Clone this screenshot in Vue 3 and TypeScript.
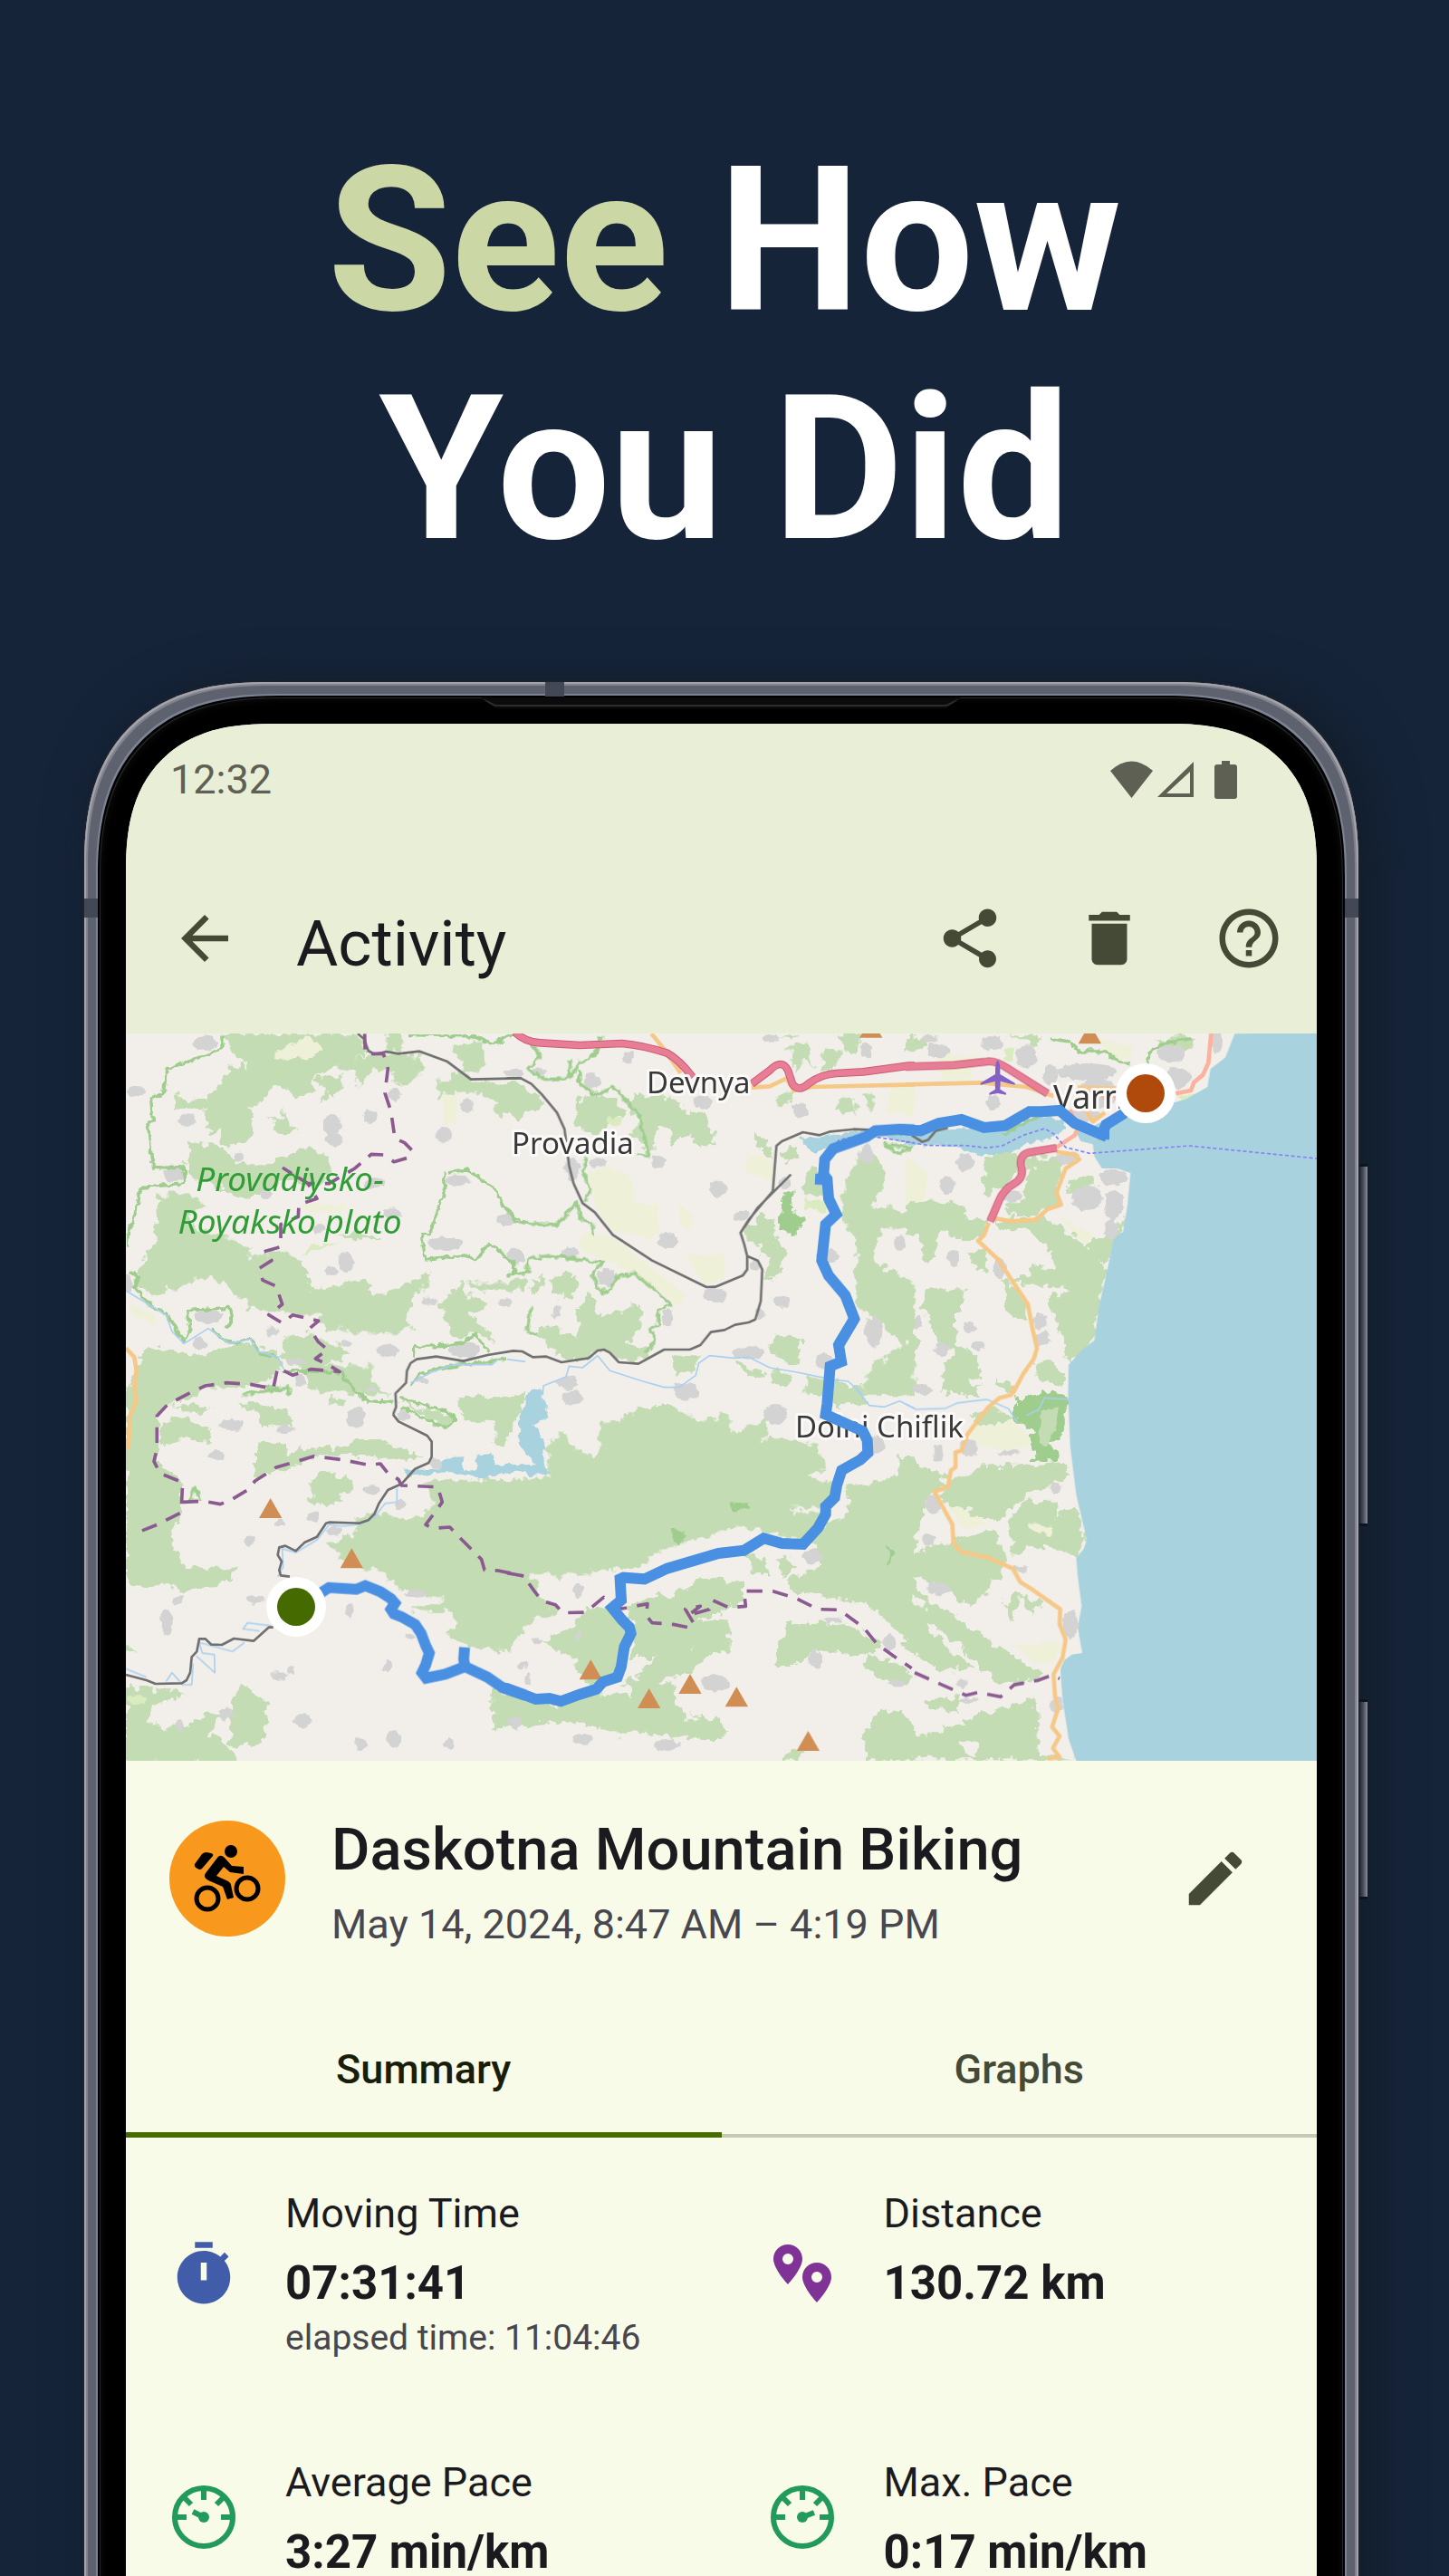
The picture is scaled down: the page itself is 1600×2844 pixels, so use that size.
<script setup lang="ts">
type Tile = 'nw' | 'n' | 'ne' | 'sw' | 's' | 'se'
type Shape = [Tile, string]
type Blob = [number, number, number, number]

interface Layer {
  name: string
  rough?: 'rough' | 'rough-fine'
  shapes: Shape[]
}

interface Stat {
  icon: 'timer' | 'pins' | 'gauge-low' | 'gauge-high'
  label: string
  value: string
  note?: string
}

const tiles: Record<Tile, string> = {
  nw: 'translate(130 1130) scale(0.33333)',
  n: 'translate(560 1130) scale(0.33333)',
  ne: 'translate(1000 1130) scale(0.33333)',
  sw: 'translate(130 1530) scale(0.33333)',
  s: 'translate(560 1530) scale(0.33333)',
  se: 'translate(1000 1530) scale(0.33333)',
}

const ground: Layer[] = [
  {
    name: 'farm',
    rough: 'rough-fine',
    shapes: [
      ['n', 'M270 490L340 475L415 515L420 590L500 600L500 700L470 715L340 680L290 600ZM350 710L590 900L580 940L430 830L240 750L250 690ZM590 770L720 765L720 850L650 860ZM570 600L620 640L600 680L570 670ZM800 430L870 450L880 520L790 490ZM1270 200L1350 200L1350 310L1260 290Z'],
      ['nw', 'M1070 230L1130 225L1115 330L1080 340ZM30 930L120 960L130 1000L60 970ZM600 600L760 600L740 625L620 625Z'],
      ['ne', 'M0 440L70 490L60 600L0 610ZM510 640L620 700L600 735ZM100 100L250 110L200 190L120 190ZM640 50L760 80L740 120L660 100Z'],
      ['se', 'M210 130L340 100L420 180L410 205L300 210L210 180ZM120 370L290 460L190 475ZM370 860L510 850L490 920L420 920Z'],
    ],
  },
  {
    name: 'forest',
    rough: 'rough',
    shapes: [
      ['nw', 'M345 34L790 34L820 95L770 130L700 155L640 180L650 220L600 240L560 210L510 215L470 260L430 290L450 310L440 380L390 405L345 400L340 350L300 370L295 290L190 280L185 240L280 255L320 215L350 200L370 140L420 140L380 90Z'],
      ['nw', 'M240 395L330 405L400 460L480 470L560 430L640 410L690 440L710 500L640 540L560 520L480 560L420 580L330 540L260 520L225 470Z'],
      ['nw', 'M130 570L220 560L300 600L230 640L260 690L360 705L440 740L440 780L540 750L600 770L620 820L650 880L760 860L830 855L850 905L920 880L1030 825L1030 860L980 900L960 980L980 1010L880 1025L830 1030L760 1010L700 1020L660 960L540 960L470 960L380 890L310 830L220 865L100 905L60 860L80 780L120 740Z'],
      ['nw', 'M90 1070L200 1090L280 1100L360 1070L440 1060L530 1100L540 1150L480 1200L280 1210L230 1250L27 1250L60 1150Z'],
      ['nw', 'M700 140L880 90L1000 110L1030 150L960 210L900 200L920 160L840 150L800 210L780 160ZM1050 200L1150 150L1180 200L1260 190L1350 230L1350 290L1300 270L1270 320L1240 260L1180 220L1060 240ZM1110 70L1200 60L1230 130L1180 165L1130 130ZM890 34L940 34L940 90L890 85Z'],
      ['nw', 'M1140 850L1070 930L1080 990L1130 1050L1190 1020L1250 1060L1200 990L1160 960L1230 940L1150 890ZM1150 860L1350 850L1350 880L1200 890ZM560 1040L650 1030L700 1060L770 1080L740 1110L680 1130L850 1140L830 1190L900 1230L640 1215L620 1150L540 1110Z'],
      ['nw', 'M650 180L740 165L750 200L720 250L700 230L660 265L690 220ZM500 310L540 330L550 270L560 330L600 360L540 365ZM720 700L800 690L880 715L780 715Z'],
      ['n', 'M235 250L300 230L360 260L390 310L330 340L300 370L225 340ZM390 250L500 230L560 260L600 290L660 290L690 400L640 400L600 370L550 400L530 350L500 330L480 430L400 370L440 330ZM0 200L60 205L115 260L100 280L60 300L40 320L0 280Z'],
      ['n', 'M925 80L990 60L1020 150L985 110L960 150ZM1050 80L1110 90L1080 150L1040 160ZM1090 34L1170 34L1150 100L1120 90ZM890 40L960 40L950 60ZM1090 240L1150 250L1160 300L1100 290ZM1180 230L1220 240L1210 300ZM890 240L950 220L930 260L890 280Z'],
      ['n', 'M780 690L840 640L890 650L880 700L920 750L910 830L850 850L870 780L820 730ZM820 360L880 410L870 440L820 400ZM900 430L960 410L970 440L930 460ZM80 850L120 840L110 900L80 880ZM140 850L200 830L240 850L220 910L160 900Z'],
      ['n', 'M280 890L300 970L350 960L440 930L440 1000L400 1060L460 1070L480 1100L420 1120L370 1110L320 1080L270 1110L190 1110L100 1030L120 990L170 1010L240 1040L230 940ZM890 1030L980 1040L975 1110L920 1130L875 1080ZM540 1095L640 1100L620 1150L560 1170ZM765 1115L850 1160L850 1175L770 1150ZM875 1145L940 1165L930 1200L880 1190Z'],
      ['n', 'M1110 580L1160 430L1230 430L1250 520L1210 610L1350 620L1350 680L1240 680L1210 780L1350 860L1350 1230L1180 1230L1190 1150L1320 1060L1240 1000L1170 960L1150 850L1160 720L1100 640ZM1020 470L1070 520L1060 560L990 570L970 540ZM1000 1170L1090 1180L1100 1230L980 1220Z'],
      ['ne', 'M260 440L370 420L380 480L330 540L260 570ZM400 440L530 440L500 540L510 600L440 630L340 640L330 610L390 580L400 520ZM530 540L600 500L640 530L550 560ZM0 600L90 580L190 600L200 640L280 660L240 710L180 715L110 690L100 770L60 780L40 700L0 690Z'],
      ['ne', 'M300 650L450 640L540 690L600 740L660 800L655 880L630 960L625 1040L580 1080L540 1130L525 1080L500 990L480 910L540 880L440 870L350 860L400 830L420 800L500 820L470 740L400 680L310 690ZM610 720L690 690L720 640L720 680L690 750L670 800L600 750Z'],
      ['ne', 'M220 760L270 740L265 830L215 790ZM310 830L350 860L400 930L400 990L320 950L340 920ZM70 880L200 880L190 930L160 970L170 1060L240 1100L250 1180L200 1180L250 1230L130 1230L120 1160L160 1080L110 1060L50 930ZM0 970L50 1050L0 1180ZM430 1130L480 1120L530 1170L520 1200L440 1180ZM300 1170L350 1200L340 1230Z'],
      ['ne', 'M330 40L450 40L440 80L390 60ZM830 60L900 40L960 50L930 90L860 80ZM0 45L70 40L60 90L0 95Z'],
      ['sw', 'M27 0L230 30L130 100L125 250L210 320L210 430L180 480L190 540L220 600L400 605L370 655L200 680L130 650L80 665L27 645Z'],
      ['sw', 'M140 120L200 100L310 140L300 190L220 170L140 200ZM400 60L480 50L570 90L580 130L480 140L450 90ZM180 65L310 70L280 95ZM450 300L450 220L480 180L550 180L570 230L600 210L680 200L720 210L790 180L870 180L1010 230L960 245L850 240L740 220L660 240L600 260L520 290ZM640 320L680 280L730 310L760 290L780 350L690 400L640 380Z'],
      ['s', 'M-500 430L-410 430L-290 440L-250 390L-270 320L-100 310L70 310L140 300L130 190L190 160L210 200L290 240L310 130L410 100L440 70L560 70L640 120L740 90L740 160L820 130L870 90L850 180L900 170L1030 200L1060 270L1000 300L1080 320L1080 380L1040 400L920 410L1060 430L980 510L860 490L780 460L690 490L520 540L430 600L300 610L240 630L80 630L120 700L170 740L60 790L40 840L0 880L-150 860L-190 830L-170 750L-330 740L-200 710L-350 680L-420 610L-530 600L-590 520L-500 500Z'],
      ['s', 'M-50 1000L40 1030L170 1060L300 1010L430 970L460 920L520 880L610 880L600 820L640 780L740 770L740 870L640 910L600 960L560 960L560 1060L700 1110L730 1150L690 1180L600 1160L550 1170L420 1140L390 1160L300 1130L170 1110L-50 1140Z'],
      ['s', 'M400 740L470 700L560 690L640 640L680 630L780 660L780 720L640 770L600 900L400 900L430 800ZM120 850L230 790L270 740L340 730L390 800L370 960L280 1000L200 900ZM780 550L860 570L870 640L820 620ZM900 560L960 590L910 640Z'],
      ['s', 'M900 870L930 790L1050 780L1180 810L1250 860L1190 890L1020 880L940 930L900 930ZM1190 890L1300 920L1350 960L1300 1000L1190 940ZM1190 1240L1180 1150L1240 1070L1310 1080L1350 1140L1350 1240ZM900 1240L950 1200L990 1190L970 1240Z'],
      ['s', 'M1120 330L1270 310L1350 230L1350 870L1260 780L1180 720L930 680L930 640L1050 600L1000 520L1060 450L1130 430ZM980 0L1180 0L1190 60L1100 70Z'],
      ['sw', 'M400 980L490 1040L490 1160L450 1200L370 1180L380 1030ZM27 1000L130 1000L230 1020L120 1060L90 1110L180 1140L250 1110L340 1080L310 1150L370 1190L400 1250L27 1250ZM700 520L770 500L790 550L720 550ZM1240 1060L1350 1040L1350 1110L1240 1140ZM1130 40L1350 30L1320 120L1280 200L1250 190L1250 120L1180 130L1130 90ZM930 50L1120 110L1080 140ZM705 35L760 50L740 65L705 60ZM30 850L65 885L30 880Z'],
      ['se', 'M-20 230L50 260L120 290L140 340L90 350L60 400L60 480L0 540L-20 540ZM160 300L260 270L410 260L530 250L540 300L410 360L290 450L200 410L110 370ZM340 460L400 380L510 380L500 440L560 390L600 510L570 560L480 540L410 530L360 560ZM150 0L250 0L200 40ZM220 90L300 70L360 110L240 130Z'],
      ['se', 'M-20 570L150 510L290 480L340 580L320 620L200 760L220 730L40 630L0 640ZM0 640L180 780L340 880L440 940L440 970L300 990L180 860L60 780L80 810L230 940L100 940L0 870ZM60 1040L180 1030L180 1080L80 1070ZM0 1150L80 1160L190 1110L280 1080L430 1030L440 1210L560 1240L0 1240ZM330 720L370 680L450 720L410 750L380 690L350 780Z'],
    ],
  },
  {
    name: 'farm',
    rough: 'rough-fine',
    shapes: [
      ['nw', 'M520 95L640 40L680 90L640 110L530 120Z'],
      ['se', 'M410 455L490 470L480 500L410 470Z'],
    ],
  },
  {
    name: 'scrub',
    rough: 'rough-fine',
    shapes: [
      ['nw', 'M610 765L640 735L740 725Z'],
      ['n', 'M980 580L1060 590L1060 630L990 610ZM340 310L380 310L370 340L330 330Z'],
      ['ne', 'M330 80L360 80L355 125L330 120ZM895 240L975 230L930 260Z'],
      ['sw', 'M30 1030L100 1030L90 1050L40 1055Z'],
    ],
  },
  {
    name: 'clearing',
    rough: 'rough',
    shapes: [
      ['ne', 'M310 690L360 690L400 720L480 760L490 790L420 770L350 740ZM410 465L440 480L430 500Z'],
      ['s', 'M520 970L560 965L560 990L500 985ZM310 980L400 990L410 1030L320 1020ZM140 900L220 880L230 930L160 940ZM560 1000L580 1060L640 1100L590 1120Z'],
      ['se', 'M20 690L75 720L60 750L30 730ZM180 1180L240 1180L240 1230L200 1220Z'],
    ],
  },
  {
    name: 'reserve',
    rough: 'rough',
    shapes: [
      ['se', 'M360 40L470 20L540 35L520 150L490 200L510 250L430 250L410 140L360 140Z'],
      ['n', 'M915 550L940 560L945 620L990 640L960 700L900 690Z'],
    ],
  },
  {
    name: 'reserve',
    rough: 'rough-fine',
    shapes: [
      ['s', 'M740 385L800 390L800 405L745 415ZM545 470L595 490L570 530L545 505ZM1250 525L1290 550L1260 600L1270 560Z'],
    ],
  },
  {
    name: 'forest',
    rough: 'rough-fine',
    shapes: [['se', 'M450 80L510 70L500 130L470 200L440 190Z']],
  },
  {
    name: 'water',
    rough: 'rough-fine',
    shapes: [
      ['n', 'M970 380L1040 375L1150 355L1350 370L1350 400L1200 370L1080 410L1020 430L980 400Z'],
      ['ne', 'M0 380L100 350L240 345L350 340L440 300L520 320L530 350L480 380L400 400L370 420L250 440L180 410L0 400Z'],
      ['sw', 'M940 275L1060 280L1080 240L1140 235L1150 280L1190 280L1190 230L1240 225L1250 265L1350 260L1350 280L1200 305L1100 285L960 300Z'],
      ['s', 'M65 20L110 10L125 60L135 100L88 130L125 180L118 250L140 290L75 298L60 280L-20 285L-20 260L95 262L38 190L40 120Z'],
      ['nw', 'M1330 1300L1360 1240L1360 1420Z'],
    ],
  },
  {
    name: 'water',
    shapes: [
      ['ne', 'M1090 34L1060 110L1050 120L1010 150L1000 210L930 250L895 260L700 300L600 350L560 350L580 390L620 400L625 440L650 480L700 480L745 495L735 600L720 690L690 710L665 830L640 940L625 1050L585 1080L540 1130L538 1230L545 1400L565 1560L600 1710L590 1740L565 1770L570 1830L583 1930L570 2000L585 2085L550 2090L525 2110L512 2140L520 2240L540 2370L565 2442L1380 2442L1380 30Z'],
    ],
  },
]

const towns: Record<Tile, Blob[]> = {
  nw: [[290, 65, 40, 25], [60, 225, 30, 18], [230, 320, 28, 22], [710, 335, 30, 35], [715, 385, 30, 20], [835, 310, 25, 22], [915, 235, 20, 20], [1157, 268, 22, 25], [1080, 370, 25, 25], [1310, 165, 35, 15], [400, 440, 14, 18], [185, 500, 35, 22], [1125, 520, 40, 18], [850, 530, 35, 16], [910, 630, 30, 20], [665, 680, 20, 20], [490, 565, 20, 14], [1085, 730, 55, 22], [755, 790, 24, 34], [705, 820, 22, 14], [300, 970, 50, 22], [270, 1060, 25, 18], [895, 1085, 38, 22], [1150, 1080, 50, 28], [1290, 650, 35, 20], [1320, 775, 25, 25], [35, 860, 15, 30], [590, 1120, 30, 10], [1030, 920, 25, 12], [605, 1180, 15, 20], [510, 1020, 25, 14], [755, 1060, 18, 10], [1285, 925, 22, 14], [1005, 1180, 25, 14]],
  n: [[400, 110, 20, 20], [280, 190, 25, 25], [110, 160, 25, 15], [20, 160, 20, 12], [650, 262, 35, 22], [970, 290, 25, 25], [300, 460, 30, 18], [215, 480, 25, 40], [500, 458, 25, 20], [700, 548, 28, 28], [530, 718, 32, 26], [775, 635, 28, 18], [210, 760, 28, 20], [25, 765, 25, 22], [330, 840, 32, 30], [685, 900, 40, 25], [910, 920, 25, 22], [165, 955, 15, 22], [530, 975, 20, 28], [820, 800, 20, 20], [1190, 430, 25, 30], [1190, 90, 20, 25], [875, 50, 30, 12], [920, 525, 18, 18], [1060, 770, 35, 28], [1300, 728, 22, 25], [800, 1090, 55, 22], [1215, 1020, 28, 50], [1050, 1120, 28, 25], [200, 1190, 35, 22], [590, 1210, 40, 18], [840, 960, 15, 18]],
  ne: [[110, 90, 38, 25], [80, 50, 25, 15], [285, 65, 35, 25], [400, 110, 35, 40], [290, 260, 22, 25], [140, 535, 28, 28], [600, 160, 100, 28], [480, 170, 25, 35], [640, 230, 60, 50], [880, 100, 45, 30], [900, 180, 45, 35], [1030, 60, 20, 35], [600, 300, 50, 25], [540, 445, 40, 22], [600, 580, 50, 40], [690, 510, 45, 28], [690, 600, 30, 50], [680, 680, 22, 35], [200, 460, 30, 30], [350, 570, 40, 18], [160, 775, 20, 30], [310, 810, 20, 35], [445, 985, 25, 25], [455, 1045, 22, 22], [210, 1005, 22, 18], [240, 1065, 22, 18], [120, 1080, 25, 22], [40, 990, 12, 20], [50, 1210, 30, 15]],
  sw: [[375, 130, 42, 20], [555, 145, 28, 15], [790, 105, 32, 35], [325, 230, 25, 17], [840, 15, 18, 10], [650, 435, 22, 20], [535, 455, 20, 12], [435, 515, 18, 18], [715, 480, 25, 14], [840, 345, 28, 14], [935, 395, 20, 18], [1055, 260, 22, 18], [945, 100, 20, 20], [455, 708, 30, 15], [200, 710, 18, 14], [162, 785, 20, 42], [990, 688, 35, 10], [768, 745, 14, 22], [970, 828, 18, 10], [893, 930, 14, 22], [535, 960, 28, 14], [575, 945, 14, 14], [360, 1085, 22, 22], [205, 1125, 15, 20], [610, 1110, 28, 24], [805, 1187, 20, 22], [915, 1172, 24, 28], [1095, 1187, 18, 16], [1315, 1115, 25, 18]],
  s: [[215, 40, 35, 25], [595, 25, 42, 22], [890, 95, 40, 32], [1215, 195, 38, 30], [235, 680, 16, 24], [97, 845, 16, 10], [237, 825, 10, 15], [50, 925, 20, 14], [70, 970, 8, 20], [690, 985, 45, 28], [1080, 775, 30, 10], [1020, 905, 24, 28], [1265, 850, 20, 24], [1290, 985, 30, 12], [1010, 565, 35, 24], [25, 1115, 24, 17], [250, 1170, 34, 18], [530, 1190, 45, 18]],
  se: [[60, 15, 25, 12], [107, 225, 18, 24], [210, 205, 30, 30], [345, 222, 35, 10], [495, 338, 22, 18], [90, 390, 28, 32], [75, 510, 22, 17], [380, 607, 25, 10], [108, 672, 38, 20], [545, 790, 25, 48], [188, 985, 18, 18], [210, 1040, 32, 7], [498, 1055, 22, 24]],
}

const motorway: Shape[] = [
  ['n', 'M25 28Q60 62 110 64L240 72L380 66Q450 72 530 98Q570 120 615 178M810 200L870 155Q910 115 930 155L945 200Q965 230 1000 198Q1040 168 1090 165L1180 160L1330 140L1350 140'],
  ['ne', 'M0 143L160 138L270 126Q300 122 340 150L470 232M500 412L420 425Q375 430 382 470Q395 510 360 530Q325 550 310 585L280 655'],
]

const lines: Layer[] = [
  {
    name: 'edge',
    rough: 'rough-fine',
    shapes: [
      ['nw', 'M345 40L345 85L165 150L150 230L110 250L115 320L100 330L115 475L220 480L220 530L75 545L55 640L35 690L30 740M1080 490L1085 540L1035 695L1005 695L1020 780L1150 768L1185 785L1230 730L1310 790L1310 830L1360 820M1095 495L1160 483L1250 550L1290 620L1350 665M980 1105L980 1070L1120 1065L1185 1030L1230 1090M165 965L220 1055L240 1010L230 950L370 940L380 975L360 1010M310 1015L370 1060L440 1045L470 1090L530 1105M960 38L1190 42L1235 70L1310 40M545 1150L740 1155L770 1200L830 1250L910 1255M935 1240L1080 1280L1120 1310L1080 1340L940 1270M970 1200L1000 1160L1100 1135L1290 1110M45 820L70 840L55 870L90 920L165 965'],
      ['n', 'M0 620L30 660L165 665L230 595L250 655L285 660L280 700M265 440L250 480L275 550L260 590M0 830L65 825L70 780L130 770L300 790L320 790L280 830L310 890L340 880L370 835L425 828L545 932L500 950L500 990L475 1010L490 1050L460 1090M85 70L110 110L70 150L120 185L205 182L240 130L290 110L310 40M240 150L240 200L300 240L350 205L390 250L440 310L470 440L430 430M210 120L205 180M65 1020L100 1030M65 1020L80 940M1250 400L1340 410L1290 430Z'],
      ['ne', 'M480 50L540 60L570 90L640 90L740 135M800 130L820 85L870 60L950 50M320 370L380 335L440 312'],
      ['sw', 'M240 380L255 335L275 380ZM410 30L570 5L560 30M480 0L540 20'],
    ],
  },
  {
    name: 'river',
    shapes: [
      ['n', 'M0 1112L60 1120M300 1100L340 1150L450 1185L520 1205L570 1205L625 1165L635 1125L670 1100L750 1108L800 1105L870 1140L960 1155L1080 1180L1130 1185L1180 1230M300 1100L250 1140L205 1135L195 1170L120 1200L118 1230M-320 1190L-250 1155L-180 1130L-50 1130L-30 1112'],
      ['s', 'M1150 0L1170 30L1200 65L1250 70L1300 50L1350 75'],
      ['se', 'M0 60L35 78L130 75L170 57L270 45L340 75L370 120M400 98L440 80L460 40L540 45'],
      ['nw', 'M27 885L160 965L180 1020L220 1060L300 1010L370 1060L440 1045L460 1085L530 1105L550 1145'],
      ['sw', 'M925 340L925 385L885 390L850 435L800 460L740 465L700 460L660 510L590 552L545 540L548 600L530 632M510 795L430 785L415 805L470 812M420 850L380 880L270 850L280 885L320 890L322 950L260 895M250 920L245 990L215 990L180 950L160 980M95 965L27 937'],
    ],
  },
  {
    name: 'rail',
    shapes: [
      ['nw', 'M795 34L815 50L830 90L850 102L890 93L930 100L1000 92L1090 125L1170 185L1335 181'],
      ['n', 'M-2 181L45 181L80 200L115 235L165 295L190 350L205 470L220 530L250 595L290 625L350 700L480 785L660 873L690 872L780 835L795 815L795 770L785 730L773 693L800 650L880 555L892 405L910 390L980 360L1035 370L1070 358L1150 350L1200 352M940 500L830 610L773 693M795 770L830 785L845 815L840 920L822 980L800 990L755 998L720 1015L675 1022L640 1065L605 1080L520 1080L435 1127L370 1122L340 1090L320 1080L300 1083L270 1108L180 1122L130 1103L85 1105L50 1086L20 1084L-65 1098L-145 1118L-235 1103L-300 1112L-320 1125L-332 1150L-335 1190L-370 1225L-368 1270L-378 1295'],
      ['sw', 'M912 95L930 118L1025 165L1040 185L1040 235L1030 255L985 275L940 325L895 345L865 390L850 425L830 445L800 455L700 452L690 455L660 500L620 518L590 547L555 530L535 535L530 560L543 582L535 610L540 628L570 632M515 800L500 800L450 845L385 837L345 858L310 857L290 838L270 838L262 880L245 898L240 950L228 975L212 985L125 987L95 975L27 957'],
      ['ne', 'M20 370L55 392L75 385L100 355L140 345'],
    ],
  },
  {
    name: 'border',
    shapes: [
      ['nw', 'M818 34L820 100L880 100L895 150L885 230L905 290L918 380L950 395L975 420L960 445L915 458L880 435L840 433L785 480L700 530L630 530L550 480L630 530L660 580L600 600L598 640L540 665L540 740L485 755L510 785L470 810L480 850L525 870L545 930L500 965L545 992L580 965L665 985L635 1010L665 1055L695 1080L655 1110L700 1132L735 1153L640 1145L580 1165L530 1140L515 1210L440 1195L360 1190L290 1200L230 1228L165 1262L130 1300L130 1410L120 1450L140 1490L215 1520L210 1620L130 1660L50 1692'],
      ['sw', 'M215 385L285 382L340 392L380 375L430 345L455 315L525 270L650 233L745 245L830 262L870 258L895 290L930 310L940 330L1060 335L1075 385L1050 420L1020 460L1045 472L1100 468L1150 520L1205 575L1215 610L1260 612L1345 630'],
      ['s', 'M0 620L55 630L90 680L115 712L160 725L185 752L260 750L320 700L380 738L465 722L460 760L480 785L550 790L600 800L620 790L590 740L640 730L600 760L670 740L680 710L735 735L790 730L785 680L880 680L960 705L1030 740L1100 742L1180 800L1225 855L1280 895L1340 935'],
      ['se', 'M30 950L120 990L200 1025L240 1015L315 1030L360 990L440 975L485 958L510 970'],
    ],
  },
  {
    name: 'road',
    shapes: [
      ['nw', 'M27 1075L55 1105L62 1150L55 1200L62 1250L40 1300L35 1410'],
      ['n', 'M478 34L520 85L575 165M810 212L870 208L925 182L950 222L1010 210L1350 202'],
      ['ne', 'M0 202L250 196L400 210L490 240M275 660L260 700L240 720L305 780L405 930L420 1010L435 1075L425 1110L390 1160L355 1225M500 425L560 435L575 450L530 480L500 560L515 600L470 615L430 650L350 655L295 645M570 212L700 215M600 290L620 325L660 295'],
      ['se', 'M360 0L350 30L310 40L270 75L205 160L185 215L165 220L165 270L150 280L140 335L95 350L155 460L158 520L185 550L270 568L355 605L380 650L420 675L512 740L510 790L530 840L520 900L490 955L495 1030L505 1070L485 1130L510 1160L488 1200L510 1230L470 1235'],
    ],
  },
  {
    name: 'trunk',
    shapes: [['ne', 'M1012 34L1003 130L985 170L955 195L945 222L895 232M500 410L560 370L570 350L545 285M650 245L700 240']],
  },
  { name: 'motorway-case', shapes: motorway },
  { name: 'motorway', shapes: motorway },
  {
    name: 'ferry',
    shapes: [
      ['n', 'M1080 410L1100 385L1180 370L1350 395'],
      ['ne', 'M0 392L80 404L200 404L270 412L320 405L390 370L460 348L490 365L530 410L610 430L940 405L1362 447'],
    ],
  },
]

const peaks: [Tile, number, number][] = [
  ['n', 1205, -19], ['ne', 610, 1], ['sw', 506, 372], ['sw', 775, 538], ['s', 277, 907],
  ['s', 470, 1002], ['s', 606, 954], ['s', 760, 997], ['s', 997, 1143],
]

const track: Shape[] = [
  ['sw', 'M620 720L700 668L790 674L820 662L870 682L905 705L918 720L905 740L915 755L940 765L985 790L1005 820L1020 860L1032 885L1020 925L1008 950L1022 968L1085 955L1150 930L1225 965L1275 1000L1350 1025M1150 930L1146 905L1149 866'],
  ['s', 'M-15 1000L0 1002L95 1038L140 1035L178 1045L240 1022L295 1005L318 980L365 965L378 930L388 865L410 820L405 800L380 775L348 735L378 710L374 640L385 635L455 640L530 605L700 555L785 545L850 505L910 522L980 525L1030 470L1055 425L1055 400L1085 370L1092 330L1108 280L1170 245L1195 222L1193 180L1178 150L1055 95L1060 60L1070 -65L1107 -80L1098 -135L1150 -222'],
  ['n', 'M1098 1065L1150 978L1120 900L1065 835L1042 785L1055 665L1090 632L1065 580L1060 515L1048 500L1052 450L1080 415L1190 375L1220 355L1300 350L1350 352M1062 517L1020 515'],
  ['ne', 'M-20 352L50 355L110 330L185 318L260 345L330 338L410 292L450 292L510 288L560 330L650 368L664 335L720 300L795 231M657 385V350'],
]

const stats: Stat[] = [
  { icon: 'timer', label: 'Moving Time', value: '07:31:41', note: 'elapsed time: 11:04:46' },
  { icon: 'pins', label: 'Distance', value: '130.72 km' },
  { icon: 'gauge-low', label: 'Average Pace', value: '3:27 min/km' },
  { icon: 'gauge-high', label: 'Max. Pace', value: '0:17 min/km' },
]

const tabs = ['Summary', 'Graphs']
</script>

<template>
  <main class="page">
    <h1 class="headline"><em>See</em> How<br />You Did</h1>

    <div class="phone">
      <span class="band band-top"></span>
      <span class="band band-left"></span>
      <span class="band band-right"></span>
      <span class="side-key key-volume"></span>
      <span class="side-key key-power"></span>
      <svg class="earpiece" viewBox="0 0 530 12" aria-hidden="true">
        <path d="M0 2H2L16 9H514L528 2H530" fill="none" stroke="#2b2c2e" stroke-width="2" />
      </svg>

      <div class="screen">
        <div class="status">
          <span class="clock">12:32</span>
          <svg class="signals" viewBox="0 0 140 42" aria-hidden="true">
            <path d="M0 11Q23 -10 47 11L23.500 41Z" />
            <path fill-rule="evenodd" d="M92 1V40H52ZM88 12V36H62Z" />
            <path d="M123 0H132V4H137Q140 4 140 7V39Q140 42 137 42H118Q115 42 115 39V7Q115 4 118 4H123Z" />
          </svg>
        </div>

        <header class="app-bar">
          <button class="icon-btn" type="button" aria-label="Back">
            <svg viewBox="0 0 24 24"><path d="M20 11H7.830l5.590-5.590L12 4l-8 8 8 8 1.410-1.410L7.830 13H20z" /></svg>
          </button>
          <h2 class="screen-title">Activity</h2>
          <div class="actions">
            <button class="icon-btn" type="button" aria-label="Share">
              <svg viewBox="0 0 24 24"><path d="M18 16.080c-.76 0-1.440.3-1.960.77L8.910 12.700c.05-.23.09-.46.09-.7s-.04-.47-.09-.7l7.050-4.110c.54.5 1.250.81 2.040.81 1.660 0 3-1.340 3-3s-1.340-3-3-3-3 1.340-3 3c0 .24.04.47.09.7L8.040 9.810C7.500 9.310 6.790 9 6 9c-1.660 0-3 1.340-3 3s1.340 3 3 3c.79 0 1.500-.31 2.040-.81l7.120 4.160c-.05.21-.08.43-.08.65 0 1.610 1.310 2.920 2.920 2.920s2.920-1.310 2.920-2.920-1.310-2.920-2.920-2.920z" /></svg>
            </button>
            <button class="icon-btn" type="button" aria-label="Delete">
              <svg viewBox="0 0 24 24"><path d="M6 19c0 1.100.9 2 2 2h8c1.100 0 2-.9 2-2V7H6v12zM19 4h-3.500l-1-1h-5l-1 1H5v2h14V4z" /></svg>
            </button>
            <button class="icon-btn" type="button" aria-label="Help">
              <svg viewBox="0 0 24 24"><path d="M11 18h2v-2h-2v2zm1-16C6.480 2 2 6.480 2 12s4.480 10 10 10 10-4.480 10-10S17.520 2 12 2zm0 18c-4.410 0-8-3.590-8-8s3.590-8 8-8 8 3.590 8 8-3.590 8-8 8zm0-14c-2.210 0-4 1.790-4 4h2c0-1.100.9-2 2-2s2 .9 2 2c0 2-3 1.750-3 5h2c0-2.250 3-2.500 3-5 0-2.210-1.790-4-4-4z" /></svg>
            </button>
          </div>
        </header>

        <svg class="map" viewBox="139 1141 1315 803" role="img" aria-label="Route map">
          <defs>
            <filter id="rough" x="0" y="0" width="100%" height="100%">
              <feTurbulence type="fractalNoise" baseFrequency="0.09" numOctaves="3" seed="4" result="noise" />
              <feDisplacementMap in="SourceGraphic" in2="noise" scale="17" xChannelSelector="R" yChannelSelector="G" />
            </filter>
            <filter id="rough-fine" x="0" y="0" width="100%" height="100%">
              <feTurbulence type="fractalNoise" baseFrequency="0.12" numOctaves="2" seed="9" result="noise" />
              <feDisplacementMap in="SourceGraphic" in2="noise" scale="8" xChannelSelector="R" yChannelSelector="G" />
            </filter>
          </defs>
          <rect class="land" x="139" y="1141" width="1315" height="803" />

          <g v-for="(layer, i) in ground" :key="'g' + i" :class="layer.name" :filter="layer.rough && `url(#${layer.rough})`">
            <path v-for="([tile, d], j) in layer.shapes" :key="j" :transform="tiles[tile]" :d="d" />
          </g>

          <g class="town" filter="url(#rough-fine)">
            <g v-for="(blobs, tile) in towns" :key="tile" :transform="tiles[tile]">
              <ellipse v-for="([cx, cy, rx, ry], j) in blobs" :key="j" :cx="cx" :cy="cy" :rx="rx" :ry="ry" />
            </g>
          </g>

          <g v-for="(layer, i) in lines" :key="'l' + i" class="line" :class="layer.name" :filter="layer.rough && `url(#${layer.rough})`">
            <path v-for="([tile, d], j) in layer.shapes" :key="j" :transform="tiles[tile]" :d="d" />
          </g>

          <g class="peak">
            <path v-for="([tile, x, y], j) in peaks" :key="j" :transform="tiles[tile]" :d="`M${x} ${y}l38 66h-76z`" />
          </g>

          <path class="airport" :transform="tiles.ne" d="M305 122Q312 125 313 150L313 168L362 197L362 203L314 192L313 218L333 230L333 236L305 231L277 236L277 230L297 218L296 192L248 203L248 197L297 168L297 150Q298 125 305 122Z" />

          <text class="place" x="714" y="1207">Devnya</text>
          <text class="place" x="565" y="1274">Provadia</text>
          <text class="place" x="878" y="1587">Dolni Chiflik</text>
          <text class="place city" x="1163" y="1224">Varna</text>
          <text class="area" x="320" y="1315">Provadiysko-</text>
          <text class="area" x="320" y="1362">Royaksko plato</text>

          <g class="track">
            <path v-for="([tile, d], j) in track" :key="j" :transform="tiles[tile]" :d="d" />
          </g>

          <circle cx="327" cy="1774" r="33" fill="#fff" />
          <circle cx="327" cy="1774" r="21" fill="#456b00" />
          <circle cx="1265" cy="1207" r="33" fill="#fff" />
          <circle cx="1265" cy="1207" r="21" fill="#b04a0c" />
        </svg>

        <section class="summary">
          <svg class="sport" viewBox="0 0 128 128" role="img" aria-label="Mountain biking">
            <circle cx="64" cy="64" r="64" fill="#f8991d" />
            <circle cx="68" cy="34" r="7" />
            <g fill="none" stroke="#000">
              <circle cx="42" cy="86" r="12" stroke-width="5" />
              <circle cx="86" cy="75" r="12" stroke-width="5" />
            </g>
            <path d="M28 48L36 37Q38 35 41 35L46 36Q49 37 48 39L36 53Q34 55 31 53Q27 51 28 48Z" />
            <path d="M55 39Q58 38 61 41L69 50L82 51V59L67 57L60 51L52 61L65 67Q68 69 68 71L71 85L64 87L59 73L43 66Q37 63 40 58L53 41Z" />
          </svg>
          <div class="summary-text">
            <h3>Daskotna Mountain Biking</h3>
            <p>May 14, 2024, 8:47 AM – 4:19 PM</p>
          </div>
          <button class="icon-btn" type="button" aria-label="Edit">
            <svg viewBox="0 0 24 24"><path d="M3 17.250V21h3.750L17.810 9.940l-3.750-3.750L3 17.250zM20.710 7.040c.39-.39.39-1.020 0-1.410l-2.340-2.340c-.39-.39-1.020-.39-1.410 0l-1.830 1.830 3.750 3.750 1.830-1.830z" /></svg>
          </button>
        </section>

        <nav class="tabs">
          <button v-for="(tab, i) in tabs" :key="tab" type="button" class="tab" :class="{ active: i === 0 }">{{ tab }}</button>
        </nav>

        <div class="stats">
          <div v-for="stat in stats" :key="stat.label" class="stat">
            <svg v-if="stat.icon === 'timer'" class="stat-icon" viewBox="0 0 24 24" fill="#415daa">
              <path fill-rule="evenodd" d="M15 1H9v2h6V1zm-4 13h2V8h-2v6zm8.030-6.610l1.420-1.420c-.43-.51-.9-.99-1.410-1.410l-1.420 1.420C16.070 4.740 14.120 4 12 4c-4.970 0-9 4.030-9 9s4.020 9 9 9 9-4.030 9-9c0-2.120-.74-4.070-1.970-5.610z" />
            </svg>
            <svg v-else-if="stat.icon === 'pins'" class="stat-icon" viewBox="0 0 78 78" fill="#803397" fill-rule="evenodd">
              <path d="M23 6C14 6 7 13 7 22C7 33 23 50 23 50S39 33 39 22C39 13 32 6 23 6ZM23 16A6 6 0 1 1 23 28A6 6 0 1 1 23 16Z" />
              <path d="M55 26C46 26 39 33 39 42C39 53 55 70 55 70S71 53 71 42C71 33 64 26 55 26ZM55 36A6 6 0 1 1 55 48A6 6 0 1 1 55 36Z" />
            </svg>
            <svg v-else class="stat-icon" viewBox="0 0 78 78" fill="none" stroke="#229a5b" stroke-width="6">
              <circle cx="39" cy="39" r="32" />
              <path d="M39 7V20M7 39H20M58 39H71M17 17L25 25M61 17L53 25" />
              <circle cx="39" cy="39" r="6" fill="#229a5b" stroke="none" />
              <path v-if="stat.icon === 'gauge-low'" d="M39 39L27 33" />
              <path v-else d="M39 39L52 34" />
            </svg>
            <div class="stat-text">
              <p class="label">{{ stat.label }}</p>
              <p class="value">{{ stat.value }}</p>
              <p v-if="stat.note" class="note">{{ stat.note }}</p>
            </div>
          </div>
        </div>
      </div>
    </div>
  </main>
</template>

<style>
body {
  margin: 0;
  background: #16243a;
}
</style>

<style scoped>
.page {
  display: flex;
  flex-direction: column;
  min-height: 100vh;
  padding: 140px 100px 0 93px;
  box-sizing: border-box;
  overflow: hidden;
  background: #16243a;
  font-family: Roboto, "Liberation Sans", sans-serif;
  color: #1b1b1f;
}

h1, h2, h3, p {
  margin: 0;
}

button {
  margin: 0;
  padding: 0;
  border: 0;
  background: none;
  font-family: inherit;
  cursor: pointer;
}

.headline {
  margin-bottom: 109px;
  padding-left: 7px;
  font-size: 222px;
  line-height: 252px;
  font-weight: 700;
  text-align: center;
  color: #fff;
}

.headline em {
  font-style: normal;
  color: #cbd8a6;
}

/* Device frame */
.phone {
  position: relative;
  flex: 1;
  margin-bottom: -46px;
  padding: 46px 46px;
  border-radius: 176px 176px 0 0;
  background: #000;
  box-shadow:
    inset 0 0 0 2px #a3a3aa,
    inset 0 0 0 4px #81838e,
    inset 0 0 0 13px #5e626e,
    inset 0 0 0 15px #7c8494,
    inset 0 0 0 17px #000,
    inset 0 0 0 18px #26272a,
    inset 0 0 8px 19px #0d0d0d,
    0 0 3px 1px #23262d,
    14px 6px 50px 8px rgba(18, 28, 38, 0.75);
}

.screen {
  overflow: hidden;
  border-radius: 144px 144px 0 0;
  background: #f8fbe8;
}

@supports (corner-shape: superellipse(1.3)) {
  .phone {
    border-radius: 204px 204px 0 0;
    corner-shape: superellipse(1.3);
  }

  .screen {
    border-radius: 162px 162px 0 0;
    corner-shape: superellipse(1.3);
  }
}

.band {
  position: absolute;
  background: #434857;
}

.band-top {
  top: 0;
  left: 509px;
  width: 21px;
  height: 16px;
}

.band-left,
.band-right {
  top: 239px;
  width: 15px;
  height: 21px;
}

.band-left {
  left: 0;
}

.band-right {
  right: 0;
}

.side-key {
  position: absolute;
  left: 100%;
  width: 9px;
  margin-left: 1px;
  box-sizing: border-box;
  border: solid #0d1420;
  border-width: 3px 0;
  background: linear-gradient(90deg, #1c2330, #4a4f5c 50%, #8b8e99);
}

.key-volume {
  top: 532px;
  height: 400px;
}

.key-power {
  top: 1123px;
  height: 221px;
}

.earpiece {
  position: absolute;
  top: 17px;
  left: 438px;
  width: 530px;
  height: 12px;
  background: #0b0b0c;
  clip-path: polygon(0 0, 100% 0, 97% 100%, 3% 100%);
}

/* Status bar and app bar */
.status {
  display: flex;
  align-items: center;
  justify-content: space-between;
  padding: 35px 88px 45px 49px;
  background: #e9eed6;
  color: #5d6052;
}

.clock {
  font-size: 45px;
  line-height: 54px;
}

.signals {
  width: 140px;
  height: 42px;
  fill: #5d6052;
}

.app-bar {
  display: flex;
  align-items: flex-start;
  padding: 64px 36px 54px 48px;
  background: #e9eed6;
}

.screen-title {
  flex: 1;
  margin-left: 62px;
  font-size: 71px;
  line-height: 90px;
  font-weight: 400;
}

.actions {
  display: flex;
  gap: 76px;
}

.icon-btn {
  flex: none;
  width: 78px;
  height: 78px;
}

.icon-btn svg {
  display: block;
  width: 100%;
  fill: #454a36;
}

/* Map */
.map {
  display: block;
  width: 100%;
}

.land { fill: #f2efea; }
.farm { fill: #eef0d7; }
.forest { fill: #c3dcb4; }
.scrub { fill: #daecbf; }
.clearing { fill: #f2efea; }
.reserve { fill: #9fcd8e; }
.water { fill: #a9d2df; }
.town { fill: #d3d3d3; }
.peak { fill: #d08e55; }
.airport { fill: #8461c4; }

.line {
  fill: none;
  stroke-linejoin: round;
}

.edge { stroke: #9fcd8e; stroke-width: 10px; }
.river { stroke: #a9d0f0; stroke-width: 5px; }
.rail { stroke: #707070; stroke-width: 8px; }
.border { stroke: #8b5a90; stroke-width: 11px; stroke-dasharray: 52 34; }
.road { stroke: #f6c888; stroke-width: 14px; }
.trunk { stroke: #fdb19f; stroke-width: 14px; }
.motorway-case { stroke: #cf5a78; stroke-width: 26px; }
.motorway { stroke: #e77e95; stroke-width: 20px; }
.ferry { stroke: #8484f4; stroke-width: 5px; stroke-dasharray: 12 8; }

.track {
  fill: none;
  stroke: #4a90e2;
  stroke-width: 36px;
}

.place {
  font-family: "Noto Sans", sans-serif;
  font-size: 33px;
  fill: #383838;
  stroke: #fbfaf8;
  stroke-width: 6px;
  stroke-linejoin: round;
  paint-order: stroke;
}

.city {
  font-size: 36px;
}

.area {
  font-family: "Noto Sans", sans-serif;
  font-size: 37px;
  font-style: italic;
  text-anchor: middle;
  fill: #2f9c36;
}

/* Activity summary */
.summary {
  display: flex;
  align-items: center;
  padding: 47px 73px 51px 48px;
}

.sport {
  flex: none;
  width: 128px;
  height: 128px;
}

.summary-text {
  flex: 1;
  margin-left: 51px;
}

.summary-text h3 {
  font-size: 65px;
  line-height: 102px;
  font-weight: 500;
}

.summary-text p {
  font-size: 45px;
  line-height: 64px;
  color: #48474f;
}

.tabs {
  display: flex;
  box-shadow: inset 0 -4px #c6c9b5;
}

.tab {
  flex: 1;
  height: 152px;
  font-size: 45px;
  font-weight: 500;
  color: #454a36;
}

.tab.active {
  color: #191e0b;
  box-shadow: inset 0 -6px #466b00;
}

.stats {
  display: grid;
  grid-template-columns: 1fr 1fr;
  gap: 109px 6px;
  padding-top: 57px;
}

.stat {
  display: flex;
  padding-left: 47px;
}

.stat-icon {
  flex: none;
  align-self: center;
  width: 78px;
  height: 78px;
}

.stat-text {
  margin-left: 51px;
}

.label {
  margin-bottom: 24px;
  font-size: 45px;
  line-height: 54px;
}

.value {
  font-size: 51px;
  line-height: 52px;
  font-weight: 700;
}

.note {
  margin-top: 10px;
  font-size: 39px;
  line-height: 48px;
  color: #48474f;
}
</style>
